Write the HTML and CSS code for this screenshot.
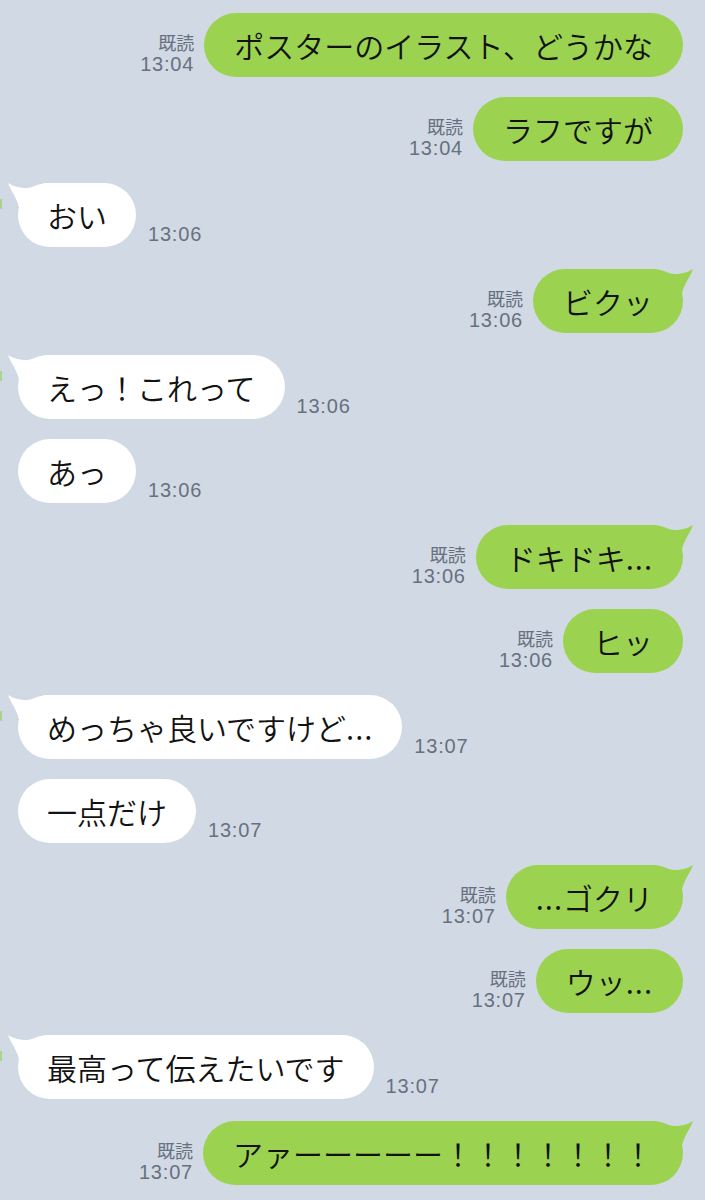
FILE: index.html
```html
<!DOCTYPE html>
<html lang="ja">
<head>
<meta charset="utf-8">
<title>LINE chat</title>
<link rel="stylesheet" href="styles.css">
</head>
<body>
<div class="chat">
  <div class="row out">
    <div class="meta"><span class="read">既読</span><span class="time">13:04</span></div>
    <div class="bubble">ポスターのイラスト、どうかな</div>
  </div>
  <div class="row out">
    <div class="meta"><span class="read">既読</span><span class="time">13:04</span></div>
    <div class="bubble">ラフですが</div>
  </div>
  <div class="row in tail">
    <div class="bubble">おい<svg class="tail-shape" viewBox="-32 0 44 30"><path d="M-32 0 C-20 0 -14 5 -9 5 C-2 5 6 3 10 0 C8 6 4 11 2 16 C0 20 -1 24 -2 28 L-32 28 Z"/></svg></div>
    <div class="meta"><span class="time">13:06</span></div>
  </div>
  <div class="row out tail">
    <div class="meta"><span class="read">既読</span><span class="time">13:06</span></div>
    <div class="bubble">ビクッ<svg class="tail-shape" viewBox="-32 0 44 30"><path d="M-32 0 C-20 0 -14 5 -9 5 C-2 5 6 3 10 0 C8 6 4 11 2 16 C0 20 -1 24 -2 28 L-32 28 Z"/></svg></div>
  </div>
  <div class="row in tail">
    <div class="bubble">えっ！これって<svg class="tail-shape" viewBox="-32 0 44 30"><path d="M-32 0 C-20 0 -14 5 -9 5 C-2 5 6 3 10 0 C8 6 4 11 2 16 C0 20 -1 24 -2 28 L-32 28 Z"/></svg></div>
    <div class="meta"><span class="time">13:06</span></div>
  </div>
  <div class="row in">
    <div class="bubble">あっ</div>
    <div class="meta"><span class="time">13:06</span></div>
  </div>
  <div class="row out tail">
    <div class="meta"><span class="read">既読</span><span class="time">13:06</span></div>
    <div class="bubble">ドキドキ<span class="dots">...</span><svg class="tail-shape" viewBox="-32 0 44 30"><path d="M-32 0 C-20 0 -14 5 -9 5 C-2 5 6 3 10 0 C8 6 4 11 2 16 C0 20 -1 24 -2 28 L-32 28 Z"/></svg></div>
  </div>
  <div class="row out">
    <div class="meta"><span class="read">既読</span><span class="time">13:06</span></div>
    <div class="bubble">ヒッ</div>
  </div>
  <div class="row in tail">
    <div class="bubble">めっちゃ良いですけど<span class="dots">...</span><svg class="tail-shape" viewBox="-32 0 44 30"><path d="M-32 0 C-20 0 -14 5 -9 5 C-2 5 6 3 10 0 C8 6 4 11 2 16 C0 20 -1 24 -2 28 L-32 28 Z"/></svg></div>
    <div class="meta"><span class="time">13:07</span></div>
  </div>
  <div class="row in">
    <div class="bubble">一点だけ</div>
    <div class="meta"><span class="time">13:07</span></div>
  </div>
  <div class="row out tail">
    <div class="meta"><span class="read">既読</span><span class="time">13:07</span></div>
    <div class="bubble"><span class="dots">...</span>ゴクリ<svg class="tail-shape" viewBox="-32 0 44 30"><path d="M-32 0 C-20 0 -14 5 -9 5 C-2 5 6 3 10 0 C8 6 4 11 2 16 C0 20 -1 24 -2 28 L-32 28 Z"/></svg></div>
  </div>
  <div class="row out">
    <div class="meta"><span class="read">既読</span><span class="time">13:07</span></div>
    <div class="bubble">ウッ<span class="dots">...</span></div>
  </div>
  <div class="row in tail">
    <div class="bubble">最高って伝えたいです<svg class="tail-shape" viewBox="-32 0 44 30"><path d="M-32 0 C-20 0 -14 5 -9 5 C-2 5 6 3 10 0 C8 6 4 11 2 16 C0 20 -1 24 -2 28 L-32 28 Z"/></svg></div>
    <div class="meta"><span class="time">13:07</span></div>
  </div>
  <div class="row out tail">
    <div class="meta"><span class="read">既読</span><span class="time">13:07</span></div>
    <div class="bubble">アァーーーーー！！！！！！！<svg class="tail-shape" viewBox="-32 0 44 30"><path d="M-32 0 C-20 0 -14 5 -9 5 C-2 5 6 3 10 0 C8 6 4 11 2 16 C0 20 -1 24 -2 28 L-32 28 Z"/></svg></div>
  </div>
</div>
</body>
</html>
```

FILE: styles.css
```css
html, body {
  margin: 0;
  padding: 0;
  background: #d1dae4;
}

body {
  font-family: "Noto Sans CJK JP", "Noto Sans", sans-serif;
  width: 705px;
  height: 1200px;
  overflow: hidden;
}

.chat {
  display: flex;
  flex-direction: column;
  padding: 13px 22px 0 18px;
}

.row {
  position: relative;
  display: flex;
  align-items: flex-end;
  margin-top: 20px;
}

.row:first-child {
  margin-top: 0;
}

.row.tail {
  margin-top: 22px;
}

.row.out {
  justify-content: flex-end;
}

.row.in.tail::before {
  content: "";
  position: absolute;
  left: -18px;
  top: 16px;
  width: 2px;
  height: 10px;
  background: #a8d58c;
}

.bubble {
  position: relative;
  height: 64px;
  line-height: 64px;
  padding: 0 30px;
  border-radius: 32px;
  font-size: 30px;
  font-weight: 350;
  color: #121212;
  white-space: nowrap;
}

.out .bubble {
  background: #9bd350;
  fill: #9bd350;
}

.in .bubble {
  padding: 0 29px;
  background: #ffffff;
  fill: #ffffff;
}

.dots {
  letter-spacing: 1px;
}

.tail-shape {
  position: absolute;
  top: 0;
  width: 44px;
  height: 30px;
}

.out .tail-shape {
  right: -12px;
}

.in .tail-shape {
  left: -12px;
  transform: scaleX(-1);
}

.meta {
  display: flex;
  flex-direction: column;
  color: #687080;
  margin-bottom: 2px;
}

.out .meta {
  align-items: flex-end;
  margin-right: 10px;
}

.in .meta {
  margin-left: 12px;
}

.read {
  font-family: "Noto Sans CJK JP", sans-serif;
  font-size: 18px;
  line-height: 20px;
  margin-bottom: 2px;
}

.time {
  font-family: "Liberation Sans", Arial, sans-serif;
  font-size: 20px;
  line-height: 21px;
  letter-spacing: 0.8px;
}
```
